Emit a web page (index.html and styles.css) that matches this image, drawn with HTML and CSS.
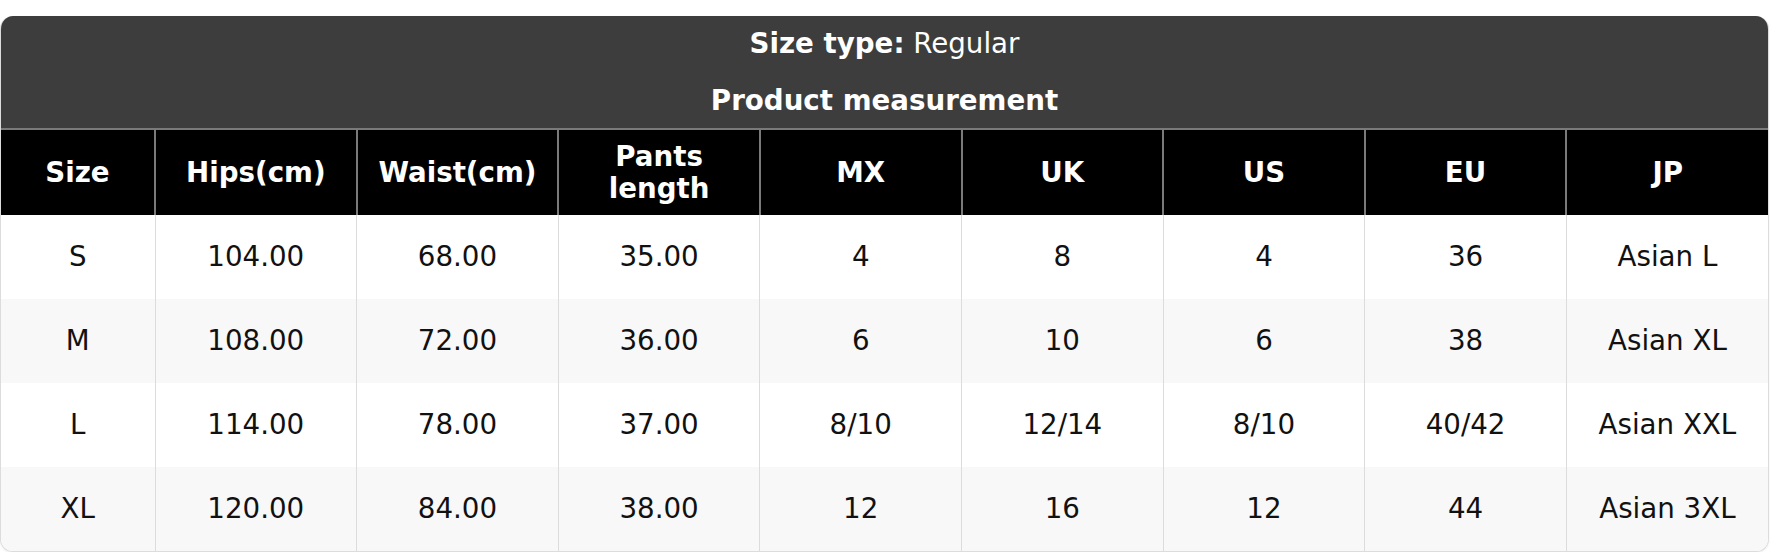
FILE: index.html
```html
<!DOCTYPE html>
<html>
<head>
<meta charset="utf-8">
<link rel="stylesheet" href="styles.css">
</head>
<body>
<div class="card">
  <div class="caption">
    <div class="cap-line"><b>Size type:</b> Regular</div>
    <div class="cap-line"><b>Product measurement</b></div>
  </div>
  <table class="size-table">
    <colgroup>
      <col class="c-size">
      <col><col><col><col><col><col><col><col>
    </colgroup>
    <thead>
      <tr>
        <th>Size</th><th>Hips(cm)</th><th>Waist(cm)</th><th>Pants<br>length</th><th>MX</th><th>UK</th><th>US</th><th>EU</th><th>JP</th>
      </tr>
    </thead>
    <tbody>
      <tr><td>S</td><td>104.00</td><td>68.00</td><td>35.00</td><td>4</td><td>8</td><td>4</td><td>36</td><td>Asian L</td></tr>
      <tr><td>M</td><td>108.00</td><td>72.00</td><td>36.00</td><td>6</td><td>10</td><td>6</td><td>38</td><td>Asian XL</td></tr>
      <tr><td>L</td><td>114.00</td><td>78.00</td><td>37.00</td><td>8/10</td><td>12/14</td><td>8/10</td><td>40/42</td><td>Asian XXL</td></tr>
      <tr><td>XL</td><td>120.00</td><td>84.00</td><td>38.00</td><td>12</td><td>16</td><td>12</td><td>44</td><td>Asian 3XL</td></tr>
    </tbody>
  </table>
</div>
</body>
</html>
```

FILE: styles.css
```css
html, body {
  margin: 0;
  padding: 0;
  background: #ffffff;
}
body {
  padding-top: 16px;
  font-family: "DejaVu Sans", sans-serif;
  font-size: 27.7px;
  color: #111111;
}
.card {
  width: 1767px;
  border: 1px solid #dcdcdc;
  border-top: none;
  border-radius: 13px;
  overflow: hidden;
  background: #fff;
  box-shadow: 0 1px 2px rgba(0,0,0,0.08);
}
.caption {
  background: #3d3d3d;
  color: #ffffff;
  display: flex;
  flex-direction: column;
  align-items: center;
  gap: 24px;
  padding: 11px 0 11px;
  line-height: 33px;
}
.cap-line b {
  font-weight: bold;
}
.size-table {
  width: 100%;
  border-collapse: collapse;
  table-layout: fixed;
}
.c-size {
  width: 154px;
}
.size-table th {
  background: #000000;
  color: #ffffff;
  font-weight: bold;
  line-height: 32px;
  padding: 11px 6px 10px;
  border-top: 2px solid #7a7a7a;
  border-left: 2px solid #7a7a7a;
  text-align: center;
}
.size-table th:first-child {
  border-left: none;
}
.size-table td {
  line-height: 32px;
  padding: 26px 6px;
  text-align: center;
  border-left: 1px solid #dcdcdc;
}
.size-table td:first-child {
  border-left: none;
}
.size-table tbody tr:nth-child(even) td {
  background: #f8f8f8;
}
```
